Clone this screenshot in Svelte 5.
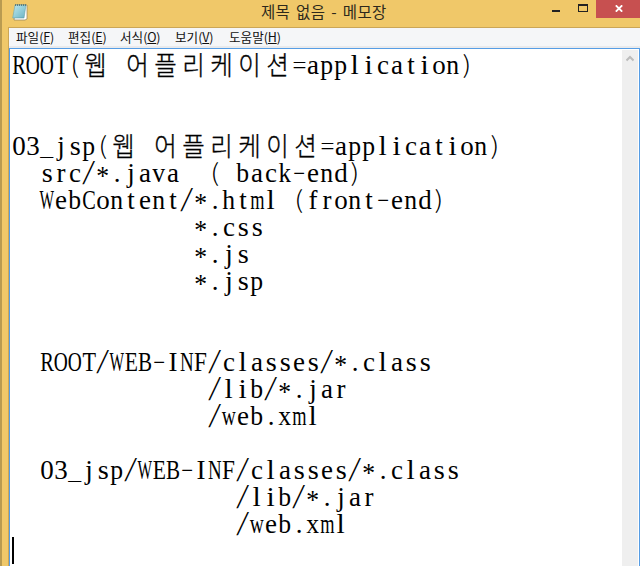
<script>
  const menus = [
    { label: '파일', key: 'F', width: 52 },
    { label: '편집', key: 'E', width: 52 },
    { label: '서식', key: 'O', width: 55 },
    { label: '보기', key: 'V', width: 54 },
    { label: '도움말', key: 'H', width: 60 }
  ];

  const text = `ROOT(웹 어플리케이션=application)


03_jsp(웹 어플리케이션=application)
  src/*.java  ( back-end)
  WebContent/*.html (front-end)
             *.css
             *.js
             *.jsp


  ROOT/WEB-INF/classes/*.class
              /lib/*.jar
              /web.xml

  03_jsp/WEB-INF/classes/*.class
                /lib/*.jar
                /web.xml
`;

  // Horizontal scale that fits each proportional glyph to the half-width cell.
  const fit = {
    R: 0.76, O: 0.72, T: 0.82, W: 0.57, C: 0.75, B: 0.78, E: 0.8, I: 1,
    N: 0.7, F: 0.86, m: 0.68, w: 0.72, h: 0.95, b: 0.95, k: 0.92, v: 0.95,
    x: 0.95, p: 0.95, n: 0.95, s: 1.05, l: 1.1, i: 1.1
  };

  // Punctuation sits at full-cell proportions rather than on the letters' metrics.
  const marks = {
    '*': 'translateY(3px) scaleX(0.95)',
    '-': 'translateY(-3px) scaleX(1.65)',
    '/': 'translateY(-3px) scaleX(1.4)',
    '(': 'translateY(-2px) scaleX(1.15)',
    ')': 'translateY(-2px) scaleX(1.15)',
    '_': 'translateY(-1px) scaleX(1.05)',
    '=': 'translateY(-1px) scaleX(1.05)'
  };

  const isWide = (c) => c >= '가' && c <= '힣';
  const isThin = (c) => '/-=_()'.includes(c);
  const place = (c) => {
    if (isWide(c)) return 'translateY(-1px) scale(0.98, 1.06)';
    return marks[c] ?? `scaleX(${fit[c] ?? 1})`;
  };
  const lines = text.split('\n').map((line) => [...line]);
</script>

<div class="window">
  <header>
    <svg class="notepad" width="18" height="18" viewBox="0 0 18 18">
      <defs>
        <linearGradient id="page" x1="0" y1="0" x2="1" y2="1">
          <stop offset="0" stop-color="#c9e9ed" />
          <stop offset="0.5" stop-color="#8dcbd8" />
          <stop offset="1" stop-color="#58a5b9" />
        </linearGradient>
      </defs>
      <path d="M4 2H15V16L13 17H2Z" fill="#fff" stroke="#8d805d" stroke-width="0.7" />
      <path d="M3 2H14L12 15H0.7Z" fill="url(#page)" stroke="#70a6a9" stroke-width="0.6" />
      <path d="M3 5H13M2.6 7H12.6M2.2 9H12.3M2 11H12M1.6 13H11.7" stroke="#a9d9df" stroke-width="0.5" />
      <path d="M3.5 1V3M5.5 1V3M7.5 1V3M9.5 1V3M11.5 1V3M13.5 1V3" stroke="#54777d" stroke-width="0.9" />
    </svg>
    <h1>제목 없음 - 메모장</h1>
    <div class="controls">
      <svg width="44" height="18" viewBox="0 0 44 18" shape-rendering="crispEdges">
        <path d="M0 10H8V12H0Z" fill="#222" />
        <path d="M26 4H36V12H26ZM27 6V11H35V6Z" fill="#222" fill-rule="evenodd" />
      </svg>
      <div class="close">
        <svg width="8" height="7" viewBox="0 0 8 7">
          <path d="M0.8 0.3L7.2 6.7M7.2 0.3L0.8 6.7" stroke="#fff" stroke-width="1.8" />
        </svg>
      </div>
    </div>
  </header>
  <div class="client">
    <nav>
      {#each menus as menu}
        <div class="menu" style="width: {menu.width}px">
          <span>{menu.label}<i>(<u>{menu.key}</u>)</i></span>
        </div>
      {/each}
    </nav>
    <main>
      <div class="text">
        {#each lines as line, n}
          <div class="line">{#each line as c}<span class="cell" class:wide={isWide(c)} class:thin={isThin(c)}><span class="glyph" style="transform: {place(c)}">{c}</span></span>{/each}{#if n === lines.length - 1}<span class="caret"></span>{/if}</div>
        {/each}
      </div>
      <div class="scrollbar">
        <svg width="8" height="7" viewBox="0 0 8 7">
          <path d="M0.5 5.5L4 2L7.5 5.5" fill="none" stroke="#bcbcbc" stroke-width="2" />
        </svg>
      </div>
    </main>
  </div>
</div>

<style>
  :global(body) { margin: 0; background: #fff; }
  .window {
    box-sizing: border-box;
    width: 640px;
    height: 566px;
    overflow: hidden;
    display: flex;
    flex-direction: column;
    background: #f0c869;
    border-left: 2px solid #b99b51;
    font-family: "Noto Sans CJK KR", sans-serif;
  }
  header {
    height: 27px;
    display: flex;
    align-items: flex-start;
    flex: none;
  }
  .notepad { margin: 3px 0 0 10px; }
  h1 {
    margin: 0 0 0 231px;
    width: 126px;
    font-size: 15.5px;
    font-weight: 400;
    line-height: 23px;
    letter-spacing: 0.3px;
    word-spacing: 2.2px;
    white-space: nowrap;
    color: #2d281c;
  }
  .controls { margin-left: auto; display: flex; }
  .close {
    width: 44px;
    height: 18px;
    background: #c75050;
    display: flex;
    justify-content: center;
    padding-top: 5px;
    padding-left: 2px;
    box-sizing: border-box;
  }
  .client {
    flex: 1;
    min-height: 0;
    margin-left: 6px;
    border: solid #cba657;
    border-width: 1px 0 0 1px;
    display: flex;
    flex-direction: column;
  }
  nav {
    box-sizing: border-box;
    height: 20px;
    flex: none;
    display: flex;
    padding-left: 7px;
    background: #f5f6f8;
    border-bottom: 2px solid #e9eaec;
  }
  .menu {
    font-size: 12.6px;
    line-height: 18px;
    white-space: nowrap;
    color: #111;
  }
  .menu i { font-style: normal; font-size: 12.5px; letter-spacing: -0.2px; }
  .menu u { text-underline-offset: 1px; text-decoration-thickness: 1px; }
  main {
    flex: 1;
    min-height: 0;
    display: flex;
    border: solid #569de5;
    border-width: 1px 1px 0 1px;
    background: #fff;
  }
  .text { flex: 1; padding: 2px 0 0 2px; }
  .line {
    display: flex;
    height: 27px;
    font: 27px/29px "Liberation Serif", "Noto Sans CJK KR", serif;
    color: #000;
  }
  .cell {
    width: 14px;
    flex: none;
    display: flex;
    justify-content: center;
    white-space: pre;
  }
  .thin {
    font-family: "Noto Sans CJK KR", sans-serif;
    font-size: 24px;
    font-weight: 300;
    line-height: 27px;
  }
  .wide {
    width: 28px;
    font-family: "Noto Sans CJK KR", sans-serif;
    font-size: 25px;
    font-weight: 300;
    line-height: 27px;
    -webkit-text-stroke: 0.3px #000;
  }
  .glyph { display: block; height: 27px; }
  .caret { width: 2px; height: 27px; background: #000; }
  .scrollbar {
    width: 16px;
    margin: 1px 1px 0 0;
    background: #efefef;
    display: flex;
    justify-content: center;
    padding-top: 5px;
    box-sizing: border-box;
  }
</style>
